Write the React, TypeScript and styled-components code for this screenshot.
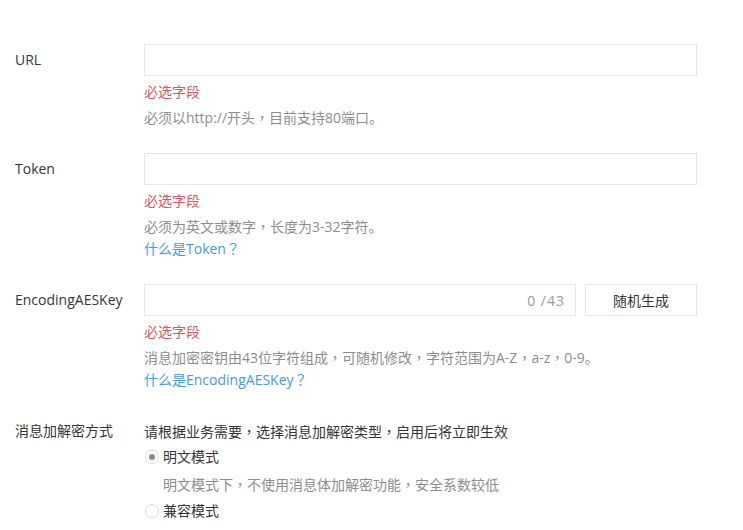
import React from 'react';
import styled, { createGlobalStyle } from 'styled-components';

const GlobalStyle = createGlobalStyle`
    html, body {
        margin: 0;
        padding: 0;
        background: #fff;
    }
    body {
        font-family: "Open Sans", "Noto Sans CJK SC", sans-serif;
        font-size: 14px;
        color: #353535;
    }
`;

const Page = styled.div`
    padding: 44px 0 0 15px;
    width: 728px;
    box-sizing: border-box;
`;

const Row = styled.div<{ extraTop?: number }>`
    display: grid;
    grid-template-columns: 129px 553px;
    margin-bottom: 25px;
    padding-top: ${props => props.extraTop || 0}px;
`;

const Label = styled.div<{ compact?: boolean }>`
    line-height: ${props => (props.compact ? '22px' : '32px')};
    color: #353535;
    white-space: nowrap;
`;

const Field = styled.div`
    display: flex;
    flex-direction: column;
`;

const InputBox = styled.div`
    flex: none;
    height: 32px;
    border: 1px solid #e6e6e6;
    box-sizing: border-box;
    display: flex;
    align-items: center;
    justify-content: flex-end;
    padding-right: 10px;
`;

const InputLine = styled.div`
    display: flex;
    gap: 9px;
    ${InputBox} {
        flex: 1;
    }
`;

const Counter = styled.span`
    color: #9a9a9a;
    letter-spacing: 1px;
`;

const Button = styled.button`
    width: 112px;
    height: 32px;
    background: #fff;
    border: 1px solid #e6e6e6;
    box-sizing: border-box;
    font-family: inherit;
    font-size: 14px;
    color: #353535;
    padding: 0;
`;

const Line = styled.div`
    height: 22px;
    line-height: 22px;
    white-space: nowrap;
`;

const Required = styled(Line)`
    color: #d9585c;
    margin-top: 5px;
    margin-bottom: 3px;
`;

const Help = styled(Line)<{ indent?: boolean }>`
    color: #8d8d8d;
    padding-left: ${props => (props.indent ? '19px' : '0')};
`;

const Link = styled.a`
    display: block;
    height: 22px;
    line-height: 22px;
    color: #459ae9;
    text-decoration: none;
`;

// full-width punctuation, centred in the em box as on the original page
const Punct = styled.span`
    font-family: "Noto Sans CJK TC", sans-serif;
`;

const Intro = styled(Line)`
    color: #353535;
    margin-bottom: 4px;
`;

const RadioLine = styled.label`
    display: flex;
    align-items: center;
    gap: 4px;
    height: 22px;
    line-height: 22px;
    padding-left: 1px;
    margin-bottom: 5px;
    color: #353535;
`;

const RadioDot = styled.span<{ checked?: boolean }>`
    width: 14px;
    height: 14px;
    border-radius: 50%;
    border: 1px solid #dcdcdc;
    box-sizing: border-box;
    background: #fff;
    display: flex;
    align-items: center;
    justify-content: center;
    &::after {
        content: '';
        width: 6px;
        height: 6px;
        border-radius: 50%;
        background: ${props => (props.checked ? '#8a8a8a' : 'transparent')};
    }
`;

const SubHelp = styled(Help)`
    margin-bottom: 5px;
`;

const C = () => <Punct>，</Punct>;

const App = () => (
    <Page>
        <GlobalStyle />
        <Row>
            <Label>URL</Label>
            <Field>
                <InputBox />
                <Required>必选字段</Required>
                <Help>必须以http://开头<C />目前支持80端口。</Help>
            </Field>
        </Row>
        <Row>
            <Label>Token</Label>
            <Field>
                <InputBox />
                <Required>必选字段</Required>
                <Help>必须为英文或数字<C />长度为3-32字符。</Help>
                <Link href="#">什么是Token<Punct>？</Punct></Link>
            </Field>
        </Row>
        <Row>
            <Label>EncodingAESKey</Label>
            <Field>
                <InputLine>
                    <InputBox>
                        <Counter>0 /43</Counter>
                    </InputBox>
                    <Button>随机生成</Button>
                </InputLine>
                <Required>必选字段</Required>
                <Help>消息加密密钥由43位字符组成<C />可随机修改<C />字符范围为A-Z<C />a-z<C />0-9。</Help>
                <Link href="#">什么是EncodingAESKey<Punct>？</Punct></Link>
            </Field>
        </Row>
        <Row extraTop={5}>
            <Label compact>消息加解密方式</Label>
            <Field>
                <Intro>请根据业务需要<C />选择消息加解密类型<C />启用后将立即生效</Intro>
                <RadioLine>
                    <RadioDot checked />
                    明文模式
                </RadioLine>
                <SubHelp indent>明文模式下<C />不使用消息体加解密功能<C />安全系数较低</SubHelp>
                <RadioLine>
                    <RadioDot />
                    兼容模式
                </RadioLine>
            </Field>
        </Row>
    </Page>
);

export default App;
